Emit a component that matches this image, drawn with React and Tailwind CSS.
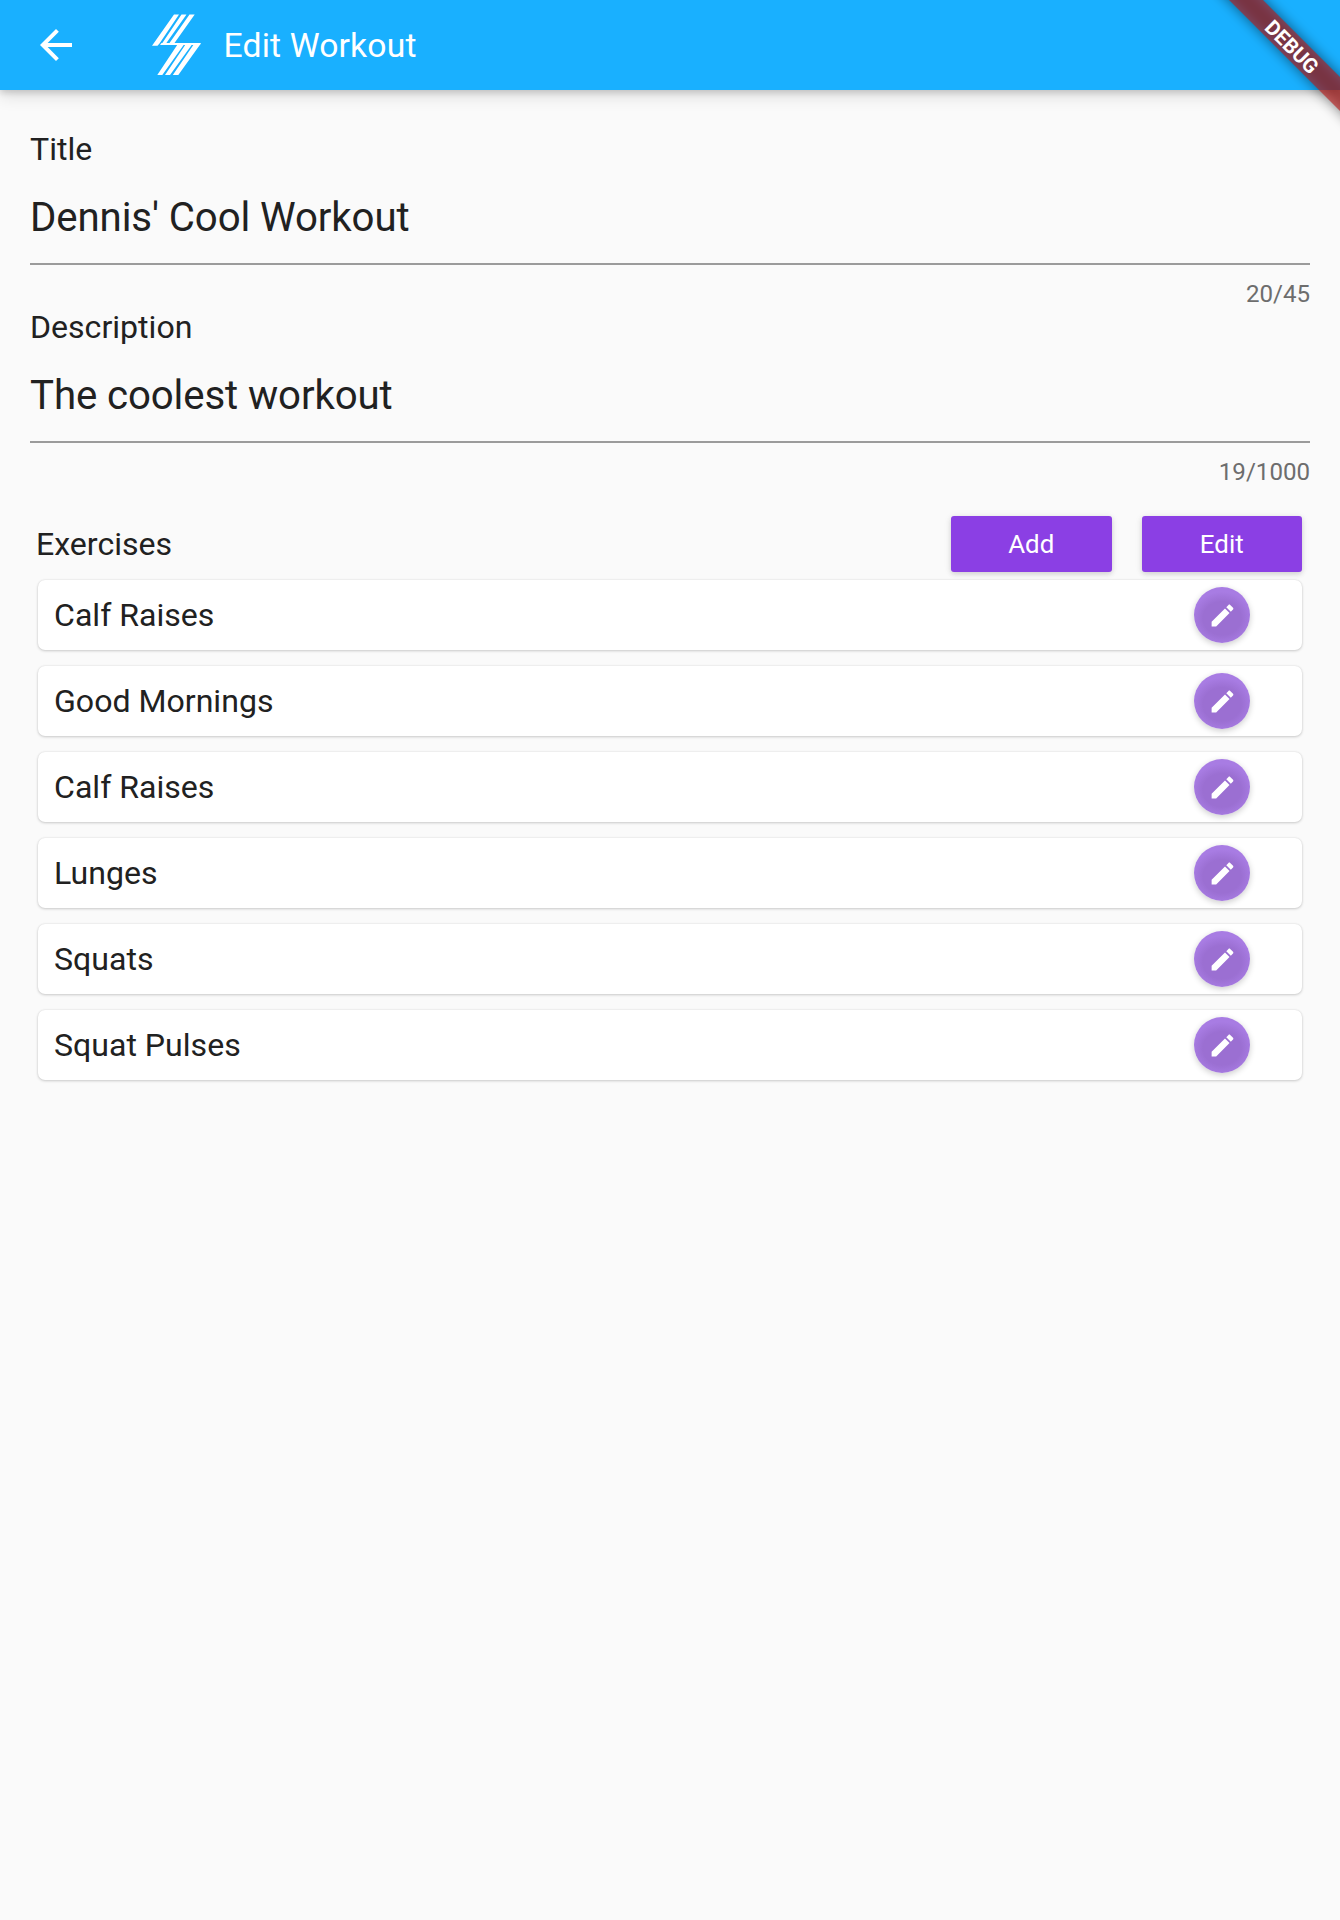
import React from "react";

const exercises = ["Calf Raises", "Good Mornings", "Calf Raises", "Lunges", "Squats", "Squat Pulses"];

function Field({ label, value, count }) {
  return (
    <div className="h-[178px]">
      <div className="h-[38px] text-[32.1px] leading-[38px]">{label}</div>
      <div className="mt-[25px] h-[52px] pt-px text-[40.2px] leading-[47px] tracking-[-0.1px]">{value}</div>
      <div className="mt-[18px] h-[2px] bg-[#9b9b9b]" />
      <div className="mt-[15px] text-right text-[24.1px] leading-[28px] text-[#6d6d6d]">{count}</div>
    </div>
  );
}

function ActionButton({ children }) {
  return (
    <button className="h-14 w-[160.5px] rounded-[3px] bg-[#8b3fe4] text-[25.9px] leading-[30px] text-white shadow-[0_2px_5px_rgba(0,0,0,0.13),0_1px_8px_rgba(0,0,0,0.07)]">
      {children}
    </button>
  );
}

function ExerciseCard({ name }) {
  return (
    <div className="flex h-[70px] items-center justify-between rounded-[7px] bg-white pr-[52px] pl-4 shadow-[0_1px_3px_rgba(0,0,0,0.18),0_0_2px_rgba(0,0,0,0.1)]">
      <span className="text-[32.1px] leading-[38px]">{name}</span>
      <button className="flex size-14 items-center justify-center rounded-full bg-[radial-gradient(closest-side_at_50%_56%,#9b6fd2_0%,#9b6fd2_68%,#a87ce3_108%)] shadow-[0_2px_6px_rgba(0,0,0,0.2)]">
        <svg viewBox="0 0 24 24" className="size-[29px] fill-white">
          <path d="M3 17.25V21h3.75L17.81 9.94l-3.75-3.75L3 17.25zM20.71 7.04c.39-.39.39-1.02 0-1.41l-2.34-2.34c-.39-.39-1.02-.39-1.41 0l-1.83 1.83 3.75 3.75 1.83-1.83z" />
        </svg>
      </button>
    </div>
  );
}

function DebugBanner() {
  return (
    <div className="pointer-events-none absolute top-0 right-0 z-20 h-[160px] w-[160px] overflow-hidden">
      <div className="absolute top-[35.3px] left-[-7.5px] h-[24.3px] w-[240px] rotate-45 bg-black/50 blur-[6.4px]" />
      <div className="absolute top-[35.3px] left-[-7.5px] flex h-[24.3px] w-[240px] rotate-45 items-center justify-center bg-[#b71c1c]/63 pt-[1.5px] pr-[2px] text-[20.6px] leading-none font-bold text-white">
        DEBUG
      </div>
    </div>
  );
}

export default function App() {
  return (
    <div className="relative min-h-[1920px] w-[1340px] overflow-hidden bg-[#fafafa] font-['Roboto',sans-serif] text-[#212121]">
      <header className="relative z-10 flex h-[90px] items-center bg-[#19b0ff] text-white shadow-[0_3px_6px_rgba(0,0,0,0.14),0_6px_16px_rgba(0,0,0,0.12)]">
        <svg viewBox="0 0 24 24" className="ml-8 size-12 fill-white">
          <path d="M20 11H7.83l5.59-5.59L12 4l-8 8 8 8 1.41-1.41L7.83 13H20v-2z" />
        </svg>
        <svg viewBox="0 0 50 62" className="ml-[72px] h-[62px] w-[50px] fill-white">
          <path d="M22 .5h5L7.5 29.5l-2 2.2H0zM29.5 .5h5L14 29.5l-5 1.5zM37.5 .5h5.2L22.5 29H49l-1 2H8l1.5-2h8zM25.5 30.5h6.5L10.3 61H5.3zM33.5 30.5h6.5L18 61h-5zM42 30h6.5L26.3 61h-5.5z" />
        </svg>
        <h1 className="mt-[2px] ml-[21.5px] text-[33.7px] leading-10 tracking-[0.15px]">Edit Workout</h1>
      </header>
      <main className="px-[30px] pt-[40px]">
        <Field label="Title" value="Dennis' Cool Workout" count="20/45" />
        <Field label="Description" value="The coolest workout" count="19/1000" />
        <section className="px-2 pt-[30px]">
          <div className="mb-2 flex items-center">
            <h2 className="-ml-[2px] flex-1 text-[32.1px] leading-[38px]">Exercises</h2>
            <div className="flex gap-[30px]">
              <ActionButton>Add</ActionButton>
              <ActionButton>Edit</ActionButton>
            </div>
          </div>
          <div className="flex flex-col gap-4">
            {exercises.map((name, i) => (
              <ExerciseCard key={i} name={name} />
            ))}
          </div>
        </section>
      </main>
      <DebugBanner />
    </div>
  );
}
